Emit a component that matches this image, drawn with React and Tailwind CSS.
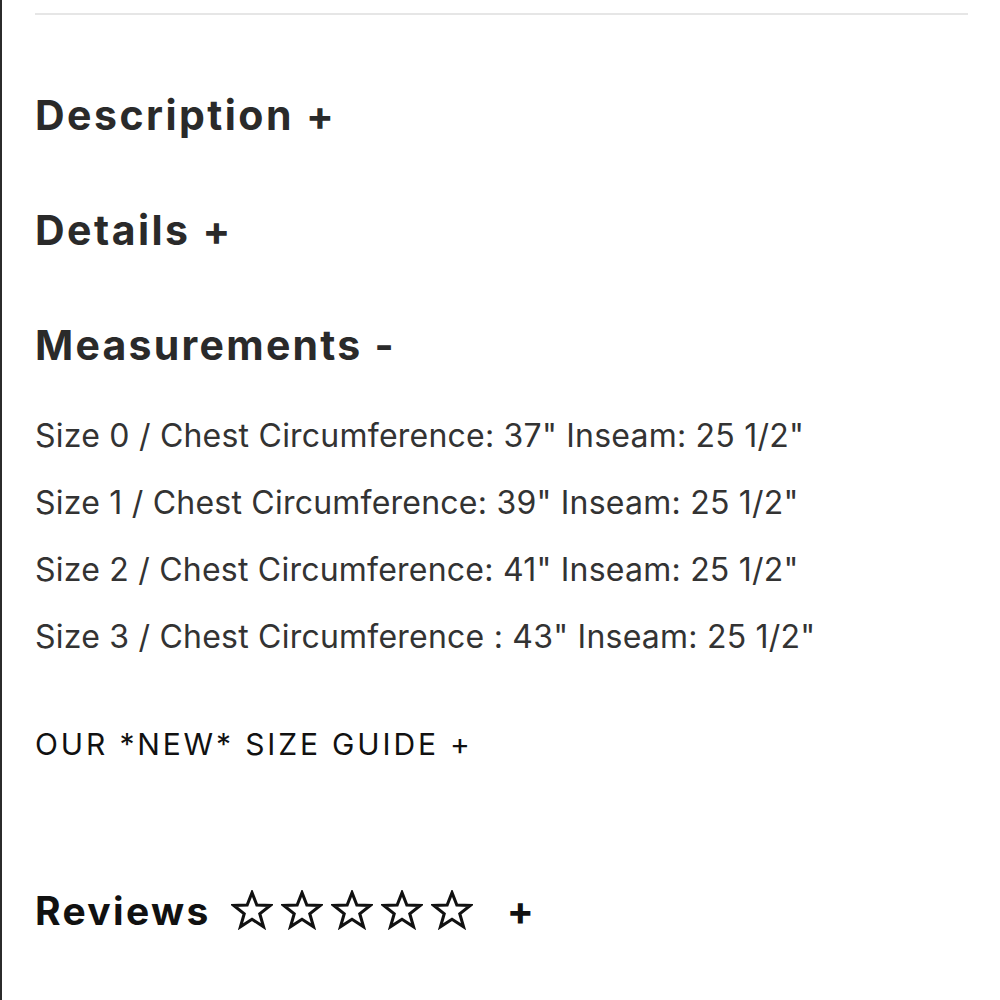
const sizes = [
  'Size 0 / Chest Circumference: 37" Inseam: 25 1/2"',
  'Size 1 / Chest Circumference: 39" Inseam: 25 1/2"',
  'Size 2 / Chest Circumference: 41" Inseam: 25 1/2"',
  'Size 3 / Chest Circumference : 43" Inseam: 25 1/2"',
]

function Star() {
  return (
    <svg viewBox="0 0 40 38" className="w-[42px] h-[40px]">
      <polygon
        points="20,2.5 24.6,14.2 37.4,14.6 27.4,22.6 31,35 20,27.8 9,35 12.6,22.6 2.6,14.6 15.4,14.2"
        fill="none"
        stroke="#111"
        strokeWidth="2.9"
        strokeLinejoin="miter"
      />
    </svg>
  )
}

export default function App() {
  return (
    <div className="w-[1000px] h-[1000px] bg-white border-l-2 border-[#2b2b2b] font-['Inter',sans-serif] overflow-hidden">
      <div className="pl-[33px] pr-[32px]">
        <div className="mt-[13px] h-[2px] bg-[#e6e6e6]" />

        <h2 className="mt-[75px] text-[41px] leading-[50px] font-bold tracking-[0.06em] text-[#2a2a2a]">Description +</h2>
        <h2 className="mt-[65px] text-[41px] leading-[50px] font-bold tracking-[0.06em] text-[#2a2a2a]">Details +</h2>
        <h2 className="mt-[65px] text-[41px] leading-[50px] font-bold tracking-[0.055em] text-[#2a2a2a]">Measurements -</h2>

        <div className="mt-[32px] text-[32px] leading-[67px] tracking-[0.007em] text-[#333]">
          {sizes.map(s => (
            <p key={s}>{s}</p>
          ))}
        </div>

        <p className="mt-[54px] text-[30px] leading-[40px] tracking-[0.095em] text-[#111]">OUR *NEW* SIZE GUIDE +</p>

        <div className="mt-[122px] flex items-center h-[50px] text-[#111]">
          <span className="text-[39px] leading-[50px] font-bold tracking-[0.06em]">Reviews</span>
          <div className="ml-[20px] flex gap-[8px] -mt-[2px]">
            <Star /><Star /><Star /><Star /><Star />
          </div>
          <span className="ml-[34px] text-[40px] leading-[50px] font-bold">+</span>
        </div>
      </div>
    </div>
  )
}
